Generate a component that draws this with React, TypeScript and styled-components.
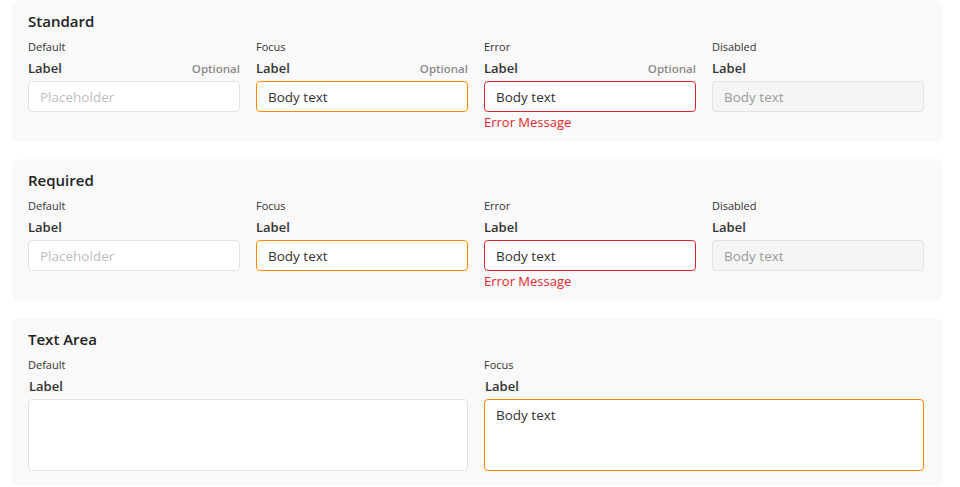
import React from 'react'
import styled, { createGlobalStyle, css } from 'styled-components'

const GlobalStyle = createGlobalStyle`
  body {
    margin: 0;
    background: #ffffff;
    font-family: 'Segoe UI', 'Open Sans', 'Noto Sans', sans-serif;
    color: #242424;
  }
`

const colors = {
  panel: '#f9f9f9',
  border: '#e2e2e2',
  focus: '#ff8a00',
  error: '#d9262e',
  errorText: '#e0282e',
  label: '#333333',
  muted: '#8a8a8a',
  placeholder: '#bdbdbd',
  disabledBg: '#f5f5f5',
  disabledText: '#9a9a9a',
}

type FieldState = 'default' | 'focus' | 'error' | 'disabled'

const Page = styled.div`
  width: 931px;
  margin-left: 12px;
  display: flex;
  flex-direction: column;
  gap: 17px;
`

const Panel = styled.section<{ $bottom?: number }>`
  background: ${colors.panel};
  border-radius: 8px;
  padding: 11px 19px ${({ $bottom }) => $bottom ?? 12}px 16px;
`

const Heading = styled.h2`
  margin: 0 0 9px;
  font-size: 15px;
  line-height: 20px;
  font-weight: 600;
  color: #222222;
`

const Grid = styled.div<{ $cols: number }>`
  display: grid;
  grid-template-columns: repeat(${({ $cols }) => $cols}, 1fr);
  column-gap: 16px;
`

const Field = styled.div`
  display: flex;
  flex-direction: column;
`

const StateName = styled.div`
  font-size: 11px;
  line-height: 14px;
  color: #333333;
  margin-bottom: 5px;
`

const LabelRow = styled.div<{ $indent?: boolean }>`
  display: flex;
  justify-content: space-between;
  align-items: baseline;
  height: 18px;
  margin-bottom: 4px;
  padding-left: ${({ $indent }) => ($indent ? 1 : 0)}px;
`

const Label = styled.label`
  font-size: 13px;
  line-height: 18px;
  font-weight: 600;
  color: ${colors.label};
`

const Optional = styled.span`
  font-size: 11.5px;
  line-height: 18px;
  font-weight: 600;
  color: ${colors.muted};
`

const boxState = (state: FieldState) => {
  switch (state) {
    case 'focus':
      return css`
        border-color: ${colors.focus};
        color: #333333;
      `
    case 'error':
      return css`
        border-color: ${colors.error};
        color: #333333;
      `
    case 'disabled':
      return css`
        background: ${colors.disabledBg};
        color: ${colors.disabledText};
      `
    default:
      return css`
        color: ${colors.placeholder};
      `
  }
}

const Box = styled.div<{ $state: FieldState }>`
  box-sizing: border-box;
  height: 31px;
  padding: 0 11px;
  display: flex;
  align-items: center;
  background: #ffffff;
  border: 1px solid ${colors.border};
  border-radius: 4px;
  font-size: 13.5px;
  ${({ $state }) => boxState($state)}
`

const AreaBox = styled(Box)`
  height: 72px;
  align-items: flex-start;
  padding-top: 6px;
`

const ErrorText = styled.div`
  margin-top: 2px;
  font-size: 13px;
  line-height: 16px;
  color: ${colors.errorText};
`

type InputProps = {
  state: FieldState
  optional?: boolean
  showError?: boolean
}

const stateTitle: Record<FieldState, string> = {
  default: 'Default',
  focus: 'Focus',
  error: 'Error',
  disabled: 'Disabled',
}

const InputField = ({ state, optional, showError }: InputProps) => (
  <Field>
    <StateName>{stateTitle[state]}</StateName>
    <LabelRow>
      <Label>Label</Label>
      {optional && <Optional>Optional</Optional>}
    </LabelRow>
    <Box $state={state}>{state === 'default' ? 'Placeholder' : 'Body text'}</Box>
    {showError && <ErrorText>Error Message</ErrorText>}
  </Field>
)

const TextAreaField = ({ state }: { state: FieldState }) => (
  <Field>
    <StateName>{stateTitle[state]}</StateName>
    <LabelRow $indent>
      <Label>Label</Label>
    </LabelRow>
    <AreaBox $state={state}>{state === 'focus' ? 'Body text' : ''}</AreaBox>
  </Field>
)

const App = () => (
  <>
    <GlobalStyle />
    <Page>
      <Panel>
        <Heading>Standard</Heading>
        <Grid $cols={4}>
          <InputField state="default" optional />
          <InputField state="focus" optional />
          <InputField state="error" optional showError />
          <InputField state="disabled" />
        </Grid>
      </Panel>
      <Panel>
        <Heading>Required</Heading>
        <Grid $cols={4}>
          <InputField state="default" />
          <InputField state="focus" />
          <InputField state="error" showError />
          <InputField state="disabled" />
        </Grid>
      </Panel>
      <Panel $bottom={15}>
        <Heading>Text Area</Heading>
        <Grid $cols={2}>
          <TextAreaField state="default" />
          <TextAreaField state="focus" />
        </Grid>
      </Panel>
    </Page>
  </>
)

export default App
